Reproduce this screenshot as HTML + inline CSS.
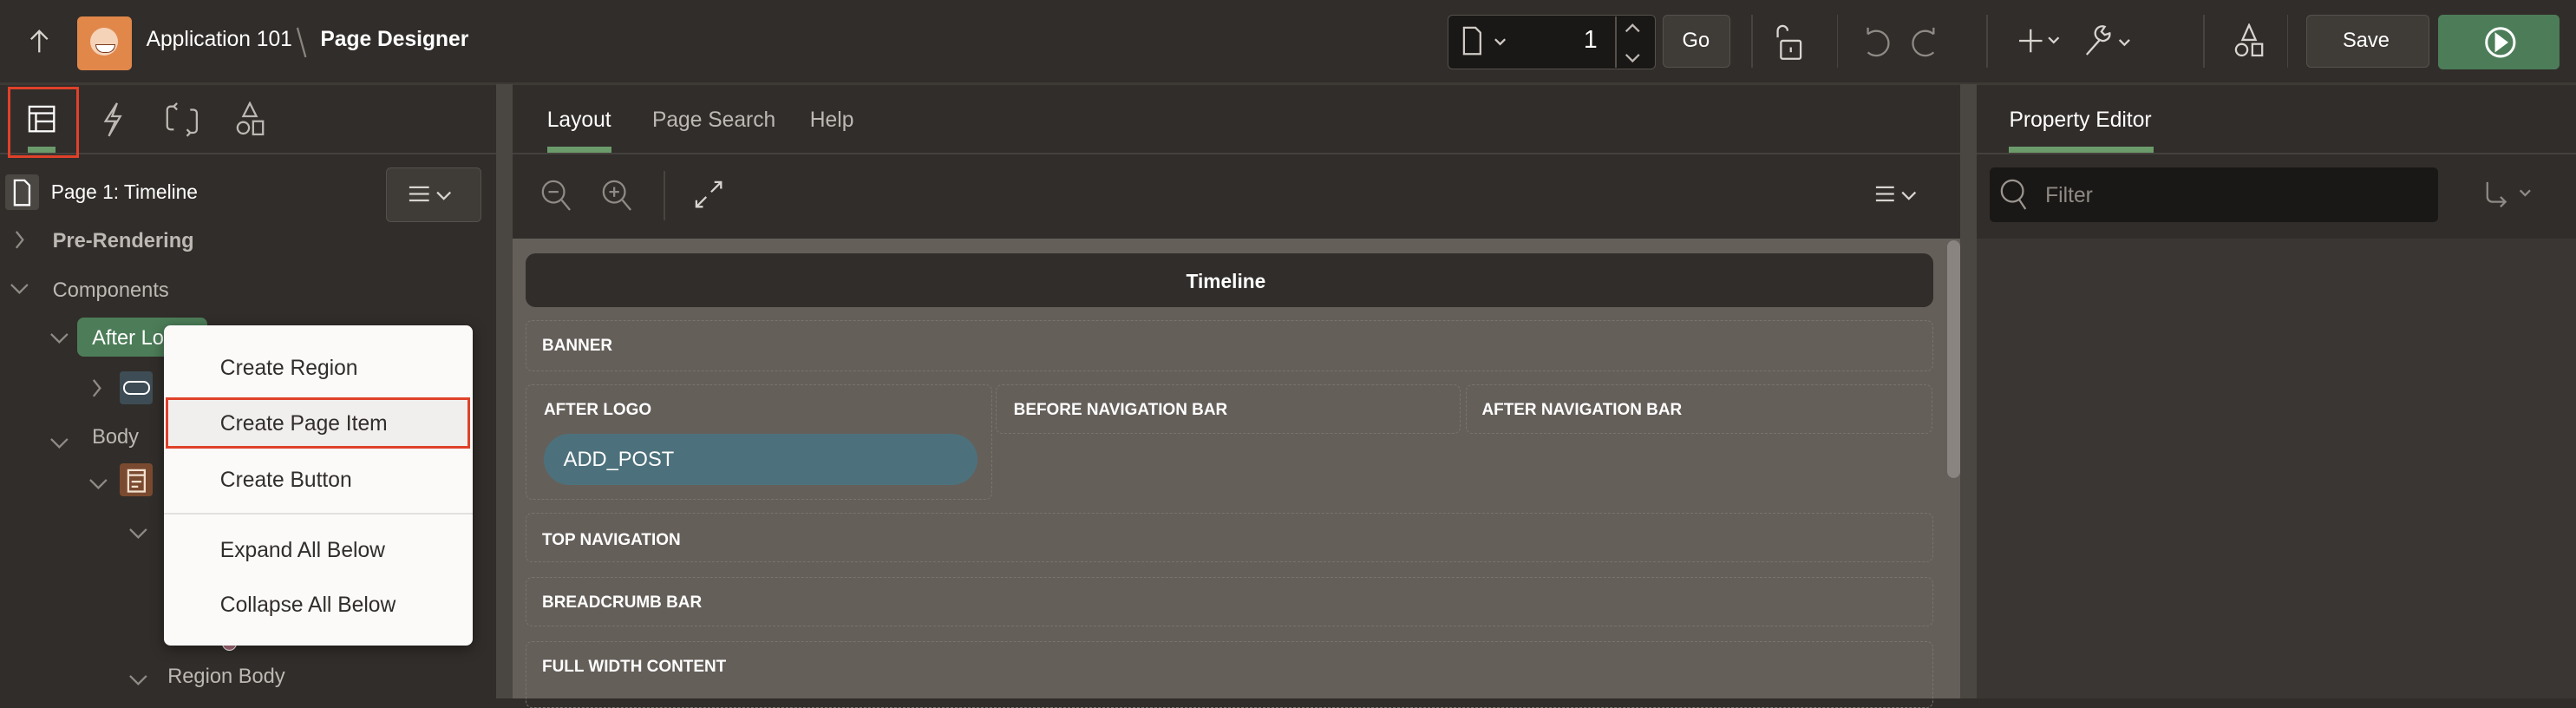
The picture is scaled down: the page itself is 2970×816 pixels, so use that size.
<!DOCTYPE html>
<html><head><meta charset="utf-8">
<style>
html,body{margin:0;padding:0;}
body{width:1568px;height:424px;overflow:hidden;zoom:1.8941;background:#312d2a;font-family:"Liberation Sans",sans-serif;color:#f1efed;position:relative;}
.a{position:absolute;}
svg{position:absolute;fill:none;stroke:currentColor;stroke-width:1.2;}
.btn{background:#3f3b37;border:1px solid #55504b;border-radius:3px;}
.sep{background:#48443f;width:1px;}
.hd{font-size:10px;font-weight:bold;color:#fff;}
.reg{position:absolute;border:1px dashed #7a746e;border-radius:4px;}
.mi{position:absolute;left:134px;font-size:13px;color:#312d2a;}
</style></head><body>
<!-- top bar -->
<div class="a" style="left:0;top:0;width:1568px;height:50px;background:#312d2a;border-bottom:2px solid #3d3935"></div>
<svg style="left:17px;top:17px;color:#d8d4d0" width="14" height="16"><path d="M7 15V2M2 7l5-5 5 5"/></svg>
<div class="a" style="left:47px;top:10px;width:33px;height:33px;background:#e2874a;border-radius:3px"></div>
<div class="a" style="left:55px;top:17px;width:17px;height:17px;background:#f4d3b8;border-radius:50%"></div>
<div class="a" style="left:58px;top:27px;width:11px;height:4px;background:#fff;border:1px solid #7b3a1e;border-radius:0 0 5px 5px"></div>
<div class="a" style="left:89px;top:17px;font-size:13px;color:#fff">Application 101</div>
<svg style="left:180px;top:16px;color:#8a847e" width="8" height="20"><path d="M1 1l5 18"/></svg>
<div class="a" style="left:195px;top:17px;font-size:13px;font-weight:bold;color:#fff">Page Designer</div>
<!-- page nav -->
<div class="a" style="left:881px;top:9px;width:126px;height:32px;background:#1a1816;border:1px solid #55504b;border-radius:3px"></div>
<div class="a" style="left:983px;top:10px;width:1px;height:31px;background:#55504b"></div>
<svg style="left:890px;top:16px;color:#cfcac5" width="30" height="18"><path d="M1 1h7l3 3v13H1z"/><path d="M20 8l3 3 3-3"/></svg>
<div class="a" style="left:964px;top:16px;font-size:15px;color:#fff">1</div>
<svg style="left:987px;top:13px;color:#bdb8b3" width="14" height="26"><path d="M3 6l4-4 4 4M3 20l4 4 4-4"/></svg>
<div class="a btn" style="left:1012px;top:9px;width:40px;height:31px"></div>
<div class="a" style="left:1024px;top:18px;font-size:12.5px;color:#fff">Go</div>
<div class="a sep" style="left:1066px;top:9px;height:32px"></div>
<svg style="left:1078px;top:15px;color:#d8d4d0" width="20" height="22"><path d="M4 8V4a3 3 0 0 1 6 0"/><rect x="6" y="10" width="12" height="11" rx="1"/><path d="M12 14v3"/></svg>
<div class="a sep" style="left:1118px;top:9px;height:32px"></div>
<svg style="left:1133px;top:16px;color:#8f8a85" width="60" height="22"><path d="M4 5A7.5 7.5 0 1 1 4 16M4 5V1"/><path d="M44 5A7.5 7.5 0 1 0 44 16M44 5V1"/></svg>
<div class="a sep" style="left:1209px;top:9px;height:32px"></div>
<svg style="left:1229px;top:16px;color:#d8d4d0" width="34" height="18"><path d="M7 2v14M0 9h14"/><path d="M18 7l3 3 3-3"/></svg>
<svg style="left:1268px;top:14px;color:#d8d4d0" width="34" height="22"><path d="M2 19l8-9a4 4 0 0 1 3-8l-2 3 2 2 3-1a4 4 0 0 1-6 4"/><path d="M22 10l3 3 3-3"/></svg>
<div class="a sep" style="left:1341px;top:9px;height:32px"></div>
<svg style="left:1360px;top:14px;color:#d8d4d0" width="18" height="22"><path d="M9 1l4 9H5z"/><circle cx="4.5" cy="16" r="3.5"/><rect x="11" y="12.5" width="6" height="7"/></svg>
<div class="a sep" style="left:1392px;top:9px;height:32px"></div>
<div class="a btn" style="left:1404px;top:9px;width:74px;height:31px"></div>
<div class="a" style="left:1426px;top:18px;font-size:12.5px;color:#fff">Save</div>
<div class="a" style="left:1484px;top:9px;width:74px;height:33px;background:#4c7d58;border-radius:3px"></div>
<svg style="left:1511px;top:15px;color:#fff;stroke-width:1.6" width="22" height="22"><circle cx="11" cy="11" r="8.5"/><path d="M8.5 6.5v9l6-4.5z" fill="#fff"/></svg>

<!-- panels -->
<div class="a" style="left:302px;top:51px;width:10px;height:374px;background:#4a4642"></div>
<div class="a" style="left:1193px;top:51px;width:10px;height:374px;background:#4a4642"></div>
<div class="a" style="left:0;top:93px;width:302px;height:1px;background:#45413d"></div>
<div class="a" style="left:312px;top:93px;width:881px;height:1px;background:#45413d"></div>
<div class="a" style="left:1203px;top:93px;width:365px;height:1px;background:#45413d"></div>

<!-- left tabs -->
<svg style="left:17px;top:64px;color:#fff" width="18" height="18"><rect x="1" y="1" width="15" height="15"/><path d="M1 5h15M5 5v11M5 10h11"/></svg>
<div class="a" style="left:17px;top:89px;width:17px;height:4px;background:#6b9b6b"></div>
<div class="a" style="left:5px;top:53px;width:43px;height:43px;border:2px solid #e0412a;box-sizing:border-box"></div>
<svg style="left:61px;top:62px;color:#bdb8b3" width="14" height="22"><path d="M10 1L3 12h6l-4 9 7-12H7z"/></svg>
<svg style="left:100px;top:62px;color:#bdb8b3" width="22" height="22"><path d="M6 3H4a2 2 0 0 0-2 2v10a2 2 0 0 0 2 2h2M8 1l-2 2 2 2M16 5h2a2 2 0 0 1 2 2v10a2 2 0 0 1-2 2h-2M14 21l2-2-2-2"/></svg>
<svg style="left:143px;top:62px;color:#bdb8b3" width="20" height="22"><path d="M9 1l4 8H5z"/><circle cx="5" cy="16" r="3.5"/><rect x="11" y="12" width="6" height="8"/></svg>

<!-- tree -->
<div class="a" style="left:3px;top:106px;width:21px;height:22px;background:#4a4642;border-radius:2px"></div>
<svg style="left:8px;top:109px;color:#fff" width="12" height="17"><path d="M1 1h6l3 3v12H1z"/></svg>
<div class="a" style="left:31px;top:110px;font-size:12px;color:#fff">Page 1: Timeline</div>
<div class="a btn" style="left:235px;top:102px;width:57px;height:32px"></div>
<svg style="left:248px;top:113px;color:#d8d4d0" width="30" height="12"><path d="M1 1h12M1 5h12M1 9h12M18 4l4 4 4-4"/></svg>
<svg style="left:8px;top:140px;color:#8f8a85" width="8" height="12"><path d="M2 1l4 5-4 5"/></svg>
<div class="a" style="left:32px;top:140px;font-size:12.5px;font-weight:bold;color:#bdb8b3">Pre-Rendering</div>
<svg style="left:6px;top:172px;color:#8f8a85" width="12" height="8"><path d="M1 1l5 5 5-5"/></svg>
<div class="a" style="left:32px;top:170px;font-size:12.5px;color:#bdb8b3">Components</div>
<svg style="left:30px;top:202px;color:#8f8a85" width="12" height="8"><path d="M1 1l5 5 5-5"/></svg>
<div class="a" style="left:47px;top:193px;width:79px;height:24px;background:#4c7d58;border-radius:4px"></div>
<div class="a" style="left:56px;top:199px;font-size:12.5px;color:#fff">After Logo</div>
<svg style="left:55px;top:230px;color:#8f8a85" width="8" height="12"><path d="M2 1l4 5-4 5"/></svg>
<div class="a" style="left:73px;top:226px;width:20px;height:20px;background:#3e4d55;border-radius:2px"></div>
<div class="a" style="left:75px;top:232px;width:14px;height:6px;border:1.2px solid #fff;border-radius:4px"></div>
<svg style="left:30px;top:266px;color:#8f8a85" width="12" height="8"><path d="M1 1l5 5 5-5"/></svg>
<div class="a" style="left:56px;top:259px;font-size:12.5px;color:#bdb8b3">Body</div>
<svg style="left:54px;top:291px;color:#8f8a85" width="12" height="8"><path d="M1 1l5 5 5-5"/></svg>
<div class="a" style="left:73px;top:282px;width:20px;height:20px;background:#7a4a30;border-radius:2px"></div>
<svg style="left:77px;top:285px;color:#f3e1d0" width="12" height="15"><rect x="1" y="1" width="10" height="13"/><path d="M1 4h10M3 8h6M3 11h4"/></svg>
<svg style="left:78px;top:321px;color:#8f8a85" width="12" height="8"><path d="M1 1l5 5 5-5"/></svg>
<div class="a" style="left:135px;top:387px;width:8px;height:8px;border-radius:50%;background:#b07080;border:1px solid #fff"></div>
<svg style="left:78px;top:410px;color:#8f8a85" width="12" height="8"><path d="M1 1l5 5 5-5"/></svg>
<div class="a" style="left:102px;top:405px;font-size:12.5px;color:#bdb8b3">Region Body</div>

<!-- menu -->
<div class="a" style="left:100px;top:198px;width:188px;height:195px;background:#fbfaf9;border-radius:4px;box-shadow:0 2px 8px rgba(0,0,0,.4)"></div>
<div class="a" style="left:101px;top:242px;width:185px;height:31px;background:#f0efee;border:2px solid #e0412a;box-sizing:border-box"></div>
<div class="mi" style="top:217px">Create Region</div>
<div class="mi" style="top:251px">Create Page Item</div>
<div class="mi" style="top:285px">Create Button</div>
<div class="a" style="left:100px;top:312px;width:188px;height:1px;background:#e3e1df"></div>
<div class="mi" style="top:328px">Expand All Below</div>
<div class="mi" style="top:361px">Collapse All Below</div>

<!-- center -->
<div class="a" style="left:333px;top:66px;font-size:13px;color:#fff">Layout</div>
<div class="a" style="left:333px;top:89px;width:39px;height:4px;background:#6b9b6b"></div>
<div class="a" style="left:397px;top:66px;font-size:13px;color:#bdb8b3">Page Search</div>
<div class="a" style="left:493px;top:66px;font-size:13px;color:#bdb8b3">Help</div>
<svg style="left:329px;top:109px;color:#8f8a85" width="20" height="20"><circle cx="8" cy="8" r="6.5"/><path d="M5 8h6M13 13l5 6"/></svg>
<svg style="left:366px;top:109px;color:#8f8a85" width="20" height="20"><circle cx="8" cy="8" r="6.5"/><path d="M5 8h6M8 5v6M13 13l5 6"/></svg>
<div class="a sep" style="left:404px;top:104px;height:30px"></div>
<svg style="left:423px;top:110px;color:#d8d4d0" width="18" height="18"><path d="M10 7l6-6M12 1h4v4M7 10l-6 6M1 12v4h4"/></svg>
<svg style="left:1141px;top:113px;color:#d8d4d0" width="30" height="12"><path d="M1 1h11M1 5h11M1 9h11M17 4l4 4 4-4"/></svg>

<div class="a" style="left:312px;top:145px;width:881px;height:280px;background:#655f5a"></div>
<div class="a" style="left:1185px;top:146px;width:8px;height:145px;background:#8a8480;border-radius:4px"></div>
<div class="a" style="left:320px;top:154px;width:857px;height:33px;background:#312d2a;border-radius:6px"></div>
<div class="a hd" style="left:722px;top:164px;font-size:12px">Timeline</div>
<div class="reg" style="left:320px;top:195px;width:856px;height:30px"></div>
<div class="a hd" style="left:330px;top:205px">BANNER</div>
<div class="reg" style="left:320px;top:234px;width:283px;height:69px"></div>
<div class="a hd" style="left:331px;top:244px">AFTER LOGO</div>
<div class="a" style="left:331px;top:264px;width:264px;height:31px;background:#4d717c;border-radius:16px"></div>
<div class="a" style="left:343px;top:273px;font-size:12.5px;color:#fff">ADD_POST</div>
<div class="reg" style="left:606px;top:234px;width:282px;height:29px"></div>
<div class="a hd" style="left:617px;top:244px">BEFORE NAVIGATION BAR</div>
<div class="reg" style="left:892px;top:234px;width:283px;height:29px"></div>
<div class="a hd" style="left:902px;top:244px">AFTER NAVIGATION BAR</div>
<div class="reg" style="left:320px;top:312px;width:856px;height:29px"></div>
<div class="a hd" style="left:330px;top:323px">TOP NAVIGATION</div>
<div class="reg" style="left:320px;top:351px;width:856px;height:29px"></div>
<div class="a hd" style="left:330px;top:361px">BREADCRUMB BAR</div>
<div class="reg" style="left:320px;top:390px;width:856px;height:40px"></div>
<div class="a hd" style="left:330px;top:400px">FULL WIDTH CONTENT</div>

<!-- right -->
<div class="a" style="left:1223px;top:66px;font-size:13px;color:#fff">Property Editor</div>
<div class="a" style="left:1223px;top:89px;width:88px;height:4px;background:#6b9b6b"></div>
<div class="a" style="left:1211px;top:102px;width:273px;height:33px;background:#1a1816;border-radius:3px"></div>
<svg style="left:1217px;top:108px;color:#9a958f" width="20" height="22"><circle cx="8" cy="8" r="6.5"/><path d="M12 13l4 6"/></svg>
<div class="a" style="left:1245px;top:112px;font-size:13px;color:#8f8a85">Filter</div>
<svg style="left:1512px;top:110px;color:#8f8a85" width="34" height="20"><path d="M2 1v9a3 3 0 0 0 3 3h8M10 10l3 3-3 3M22 6l3 3 3-3"/></svg>
<div class="a" style="left:1203px;top:145px;width:365px;height:280px;background:#3a3633"></div>
</body></html>
